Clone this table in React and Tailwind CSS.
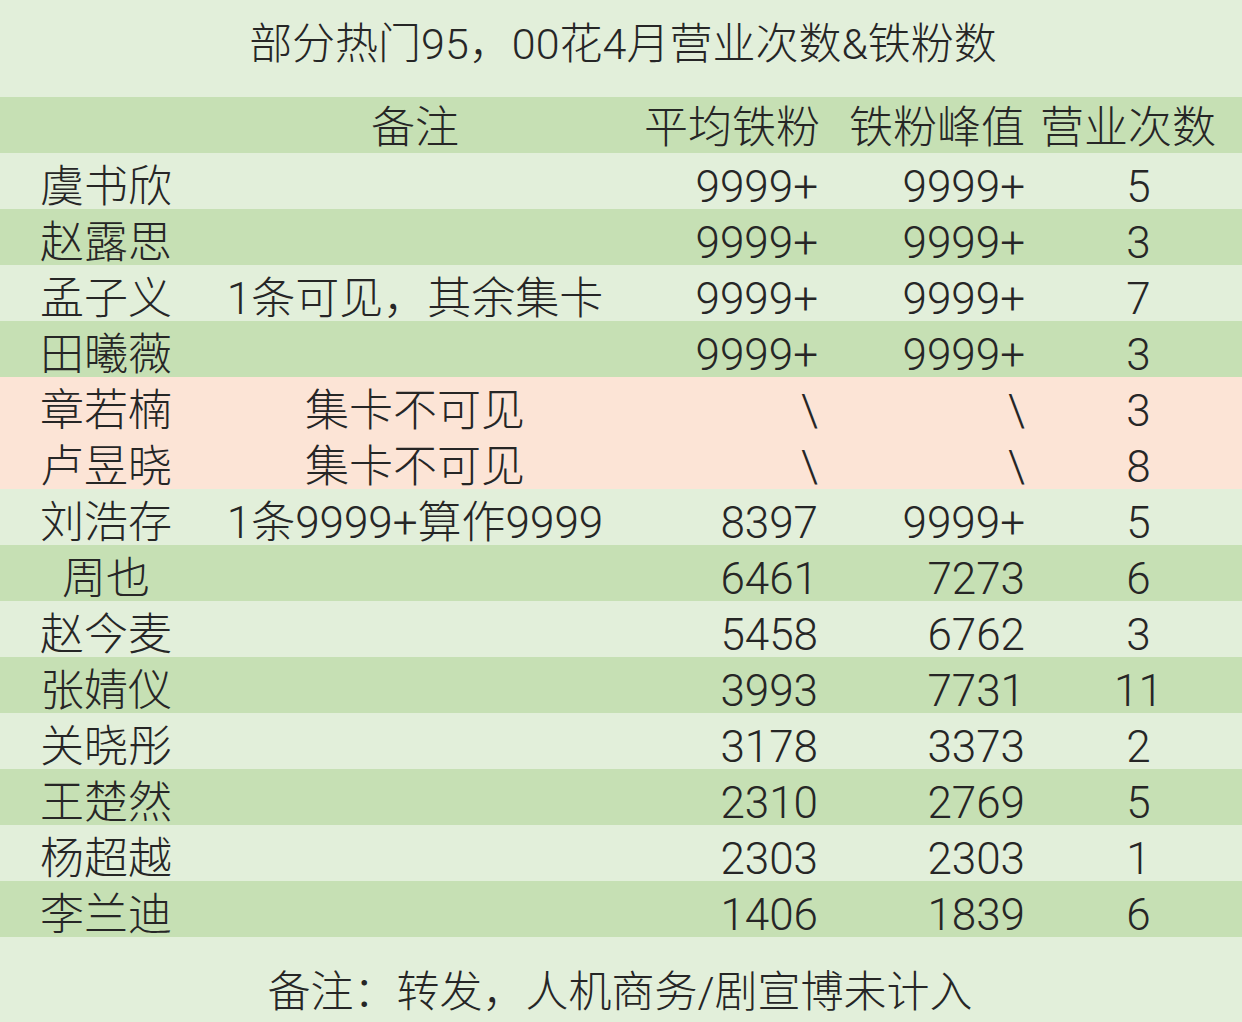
const rows = [
  { name: "虞书欣", note: "", avg: "9999+", peak: "9999+", count: "5", tone: "light" },
  { name: "赵露思", note: "", avg: "9999+", peak: "9999+", count: "3", tone: "dark" },
  { name: "孟子义", note: "1条可见，其余集卡", avg: "9999+", peak: "9999+", count: "7", tone: "light" },
  { name: "田曦薇", note: "", avg: "9999+", peak: "9999+", count: "3", tone: "dark" },
  { name: "章若楠", note: "集卡不可见", avg: "\\", peak: "\\", count: "3", tone: "pink" },
  { name: "卢昱晓", note: "集卡不可见", avg: "\\", peak: "\\", count: "8", tone: "pink" },
  { name: "刘浩存", note: "1条9999+算作9999", avg: "8397", peak: "9999+", count: "5", tone: "light" },
  { name: "周也", note: "", avg: "6461", peak: "7273", count: "6", tone: "dark" },
  { name: "赵今麦", note: "", avg: "5458", peak: "6762", count: "3", tone: "light" },
  { name: "张婧仪", note: "", avg: "3993", peak: "7731", count: "11", tone: "dark" },
  { name: "关晓彤", note: "", avg: "3178", peak: "3373", count: "2", tone: "light" },
  { name: "王楚然", note: "", avg: "2310", peak: "2769", count: "5", tone: "dark" },
  { name: "杨超越", note: "", avg: "2303", peak: "2303", count: "1", tone: "light" },
  { name: "李兰迪", note: "", avg: "1406", peak: "1839", count: "6", tone: "dark" },
];

const toneClass = {
  light: "bg-[#e2efda]",
  dark: "bg-[#c6e0b4]",
  pink: "bg-[#fce4d6]",
};

const grid = "grid grid-cols-[212px_406px_212px_205px_1fr] h-[56px] items-center";

export default function App() {
  return (
    <div
      className="w-[1242px] h-[1022px] bg-[#e2efda] text-[#262626] font-light overflow-hidden"
      style={{ fontFamily: 'Roboto, "Noto Sans CJK SC", sans-serif' }}
    >
      <div className="h-[97px] flex items-center justify-center text-[43px] leading-none pb-[8px] pl-[4px]">
        部分热门95，00花4月营业次数&amp;铁粉数
      </div>

      <div className={`${grid} bg-[#c6e0b4] text-[44px] leading-none pt-[6px]`}>
        <div />
        <div className="text-center">备注</div>
        <div className="text-right pr-[10px]">平均铁粉</div>
        <div className="text-right pr-[10px]">铁粉峰值</div>
        <div className="text-right pr-[26px]">营业次数</div>
      </div>

      {rows.map((r) => (
        <div key={r.name} className={`${grid} ${toneClass[r.tone]} text-[44px] leading-none pt-[12px]`}>
          <div className="text-center">{r.name}</div>
          <div className="text-center">{r.note}</div>
          <div className="text-right pr-[12px]">{r.avg}</div>
          <div className="text-right pr-[10px]">{r.peak}</div>
          <div className="text-center">{r.count}</div>
        </div>
      ))}

      <div className="h-[85px] flex items-center justify-center text-[43px] leading-none pt-[26px] pr-[2px]">
        备注：转发，人机商务/剧宣博未计入
      </div>
    </div>
  );
}
